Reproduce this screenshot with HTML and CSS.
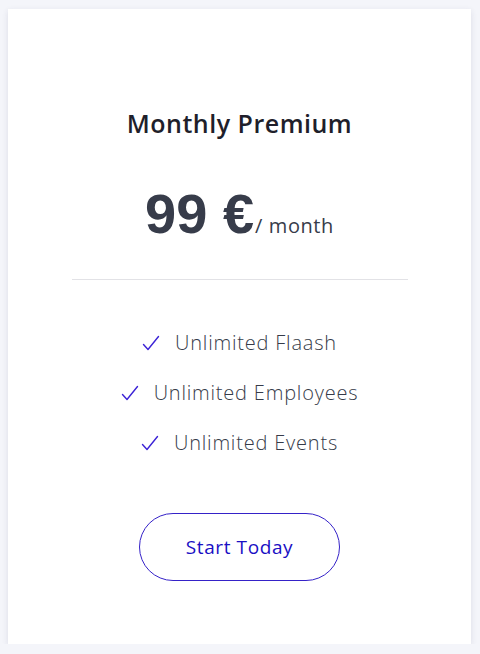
FILE: index.html
```html
<!DOCTYPE html>
<html>
<head>
<meta charset="utf-8">
<link rel="stylesheet" href="styles.css">
</head>
<body>
<div class="card">
  <h2 class="title">Monthly Premium</h2>
  <div class="price"><span class="amount">99 €</span><span class="period">/ month</span></div>
  <hr class="divider">
  <ul class="features">
    <li><svg class="check" width="18" height="16" viewBox="0 0 18 16"><path d="M1.5 9.5 L6 14.5 L16.5 1.5" fill="none" stroke="#3b22d6" stroke-width="1.4" stroke-linecap="round" stroke-linejoin="round"/></svg><span>Unlimited Flaash</span></li>
    <li><svg class="check" width="18" height="16" viewBox="0 0 18 16"><path d="M1.5 9.5 L6 14.5 L16.5 1.5" fill="none" stroke="#3b22d6" stroke-width="1.4" stroke-linecap="round" stroke-linejoin="round"/></svg><span>Unlimited Employees</span></li>
    <li><svg class="check" width="18" height="16" viewBox="0 0 18 16"><path d="M1.5 9.5 L6 14.5 L16.5 1.5" fill="none" stroke="#3b22d6" stroke-width="1.4" stroke-linecap="round" stroke-linejoin="round"/></svg><span>Unlimited Events</span></li>
  </ul>
  <button class="cta">Start Today</button>
</div>
</body>
</html>
```
FILE: styles.css
```css
html, body {
  margin: 0;
  padding: 0;
}
body {
  background: #f4f5fa;
  padding: 9px 9px 0 8px;
  font-family: "Open Sans", "DejaVu Sans", sans-serif;
}
.card {
  width: 463px;
  height: 635px;
  box-sizing: border-box;
  background: #ffffff;
  box-shadow: 0 2px 6px rgba(40, 45, 80, 0.12);
  padding-top: 96px;
  display: flex;
  flex-direction: column;
  align-items: center;
}
.title {
  margin: 0;
  font-size: 25px;
  line-height: 36px;
  letter-spacing: 0.5px;
  font-weight: 600;
  color: #1f1f2b;
}
.price {
  margin-top: 45px;
  display: flex;
  align-items: baseline;
  color: #373c4a;
}
.amount {
  font-family: "Liberation Sans", Arial, sans-serif;
  font-weight: 700;
  font-size: 56px;
  line-height: 56px;
}
.period {
  font-size: 20px;
  letter-spacing: 0.6px;
  font-weight: 400;
  margin-left: 1px;
}
.divider {
  width: 336px;
  border: 0;
  border-top: 1px solid #e2e2e6;
  margin: 37px 0 0 0;
}
.features {
  list-style: none;
  margin: 48px 0 0 0;
  padding: 0;
  display: flex;
  flex-direction: column;
  align-items: center;
  gap: 20px;
}
.features li {
  display: flex;
  align-items: center;
  gap: 15px;
  font-size: 20px;
  letter-spacing: 0.8px;
  line-height: 30px;
  font-weight: 300;
  color: #363b49;
}
.check {
  display: block;
}
.cta {
  margin-top: 55px;
  width: 201px;
  height: 68px;
  border: 1px solid #3522c8;
  border-radius: 34px;
  background: #ffffff;
  color: #1a0fc4;
  font-family: "Open Sans", "DejaVu Sans", sans-serif;
  font-size: 19px;
  letter-spacing: 0.6px;
  font-weight: 500;
  cursor: pointer;
}
```
